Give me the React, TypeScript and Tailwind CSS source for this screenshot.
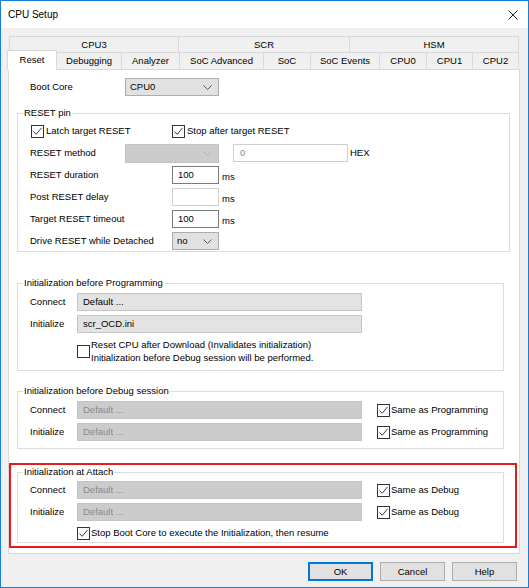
import type { ReactNode } from 'react';

function Check({ checked }: { checked?: boolean }) {
  return (
    <span className="flex h-[13px] w-[13px] shrink-0 items-center justify-center border border-[#333333] bg-white">
      {checked && (
        <svg viewBox="0 0 11 11" className="h-[11px] w-[11px]">
          <path d="M1.5 5.5 L4.2 8.3 L9.6 1.8" stroke="#3c3c3c" strokeWidth="1" fill="none" />
        </svg>
      )}
    </span>
  );
}

function Chevron({ light }: { light?: boolean }) {
  return (
    <svg viewBox="0 0 9 5" className="h-[5px] w-[9px]">
      <path d="M0.5 0.5 L4.5 4.5 L8.5 0.5" stroke={light ? '#b0b0b0' : '#555555'} strokeWidth="1" fill="none" />
    </svg>
  );
}

function Group({ title, className, children }: { title: string; className?: string; children: ReactNode }) {
  return (
    <fieldset className={`border border-[#dcdcdc] ${className ?? ''}`}>
      <legend className="ml-[5px] px-[1px] leading-[12px]">{title}</legend>
      {children}
    </fieldset>
  );
}

function Field({ value, kind }: { value: string; kind: 'readonly' | 'disabled' }) {
  const cls =
    kind === 'readonly'
      ? 'bg-[#e3e3e3] border-[#c4c4c4] text-black'
      : 'bg-[#cccccc] border-[#c4c4c4] text-[#8a8a8a]';
  return (
    <div className={`flex h-[18px] w-[285px] items-center border pl-[5px] ${cls}`}>{value}</div>
  );
}

function Unit({ label, value, light }: { label: string; value?: string; light?: boolean }) {
  return (
    <div className="flex h-[18px] items-center">
      <span className="w-[142px]">{label}</span>
      <div
        className={`flex h-[18px] w-[47px] items-center border bg-white pl-[5px] ${
          light ? 'border-[#cfcfcf]' : 'border-[#7a7a7a]'
        }`}
      >
        {value}
      </div>
      <span className="ml-[3px] mt-[3px]">ms</span>
    </div>
  );
}

const row1 = [
  { label: 'CPU3', w: 'w-[169px]' },
  { label: 'SCR', w: 'w-[171px]' },
  { label: 'HSM', w: 'w-[170px] border-r' },
];

const row2 = [
  { label: 'Debugging', w: 'w-[65px]' },
  { label: 'Analyzer', w: 'w-[58px]' },
  { label: 'SoC Advanced', w: 'w-[84px]' },
  { label: 'SoC', w: 'w-[47px]' },
  { label: 'SoC Events', w: 'w-[69px]' },
  { label: 'CPU0', w: 'w-[47px]' },
  { label: 'CPU1', w: 'w-[46px]' },
  { label: 'CPU2', w: 'w-[46px]' },
];

export default function App() {
  return (
    <div className="flex h-[588px] w-[529px] flex-col border border-[#1a7fd4] bg-[#f0f0f0] font-['Liberation_Sans',Arial,sans-serif] text-[9.5px] leading-[12px] text-black">
      {/* title bar */}
      <div className="flex h-[27px] shrink-0 items-center justify-between bg-white pl-[7px] pr-[10px]">
        <span className="text-[10px]">CPU Setup</span>
        <svg viewBox="0 0 10 10" className="h-[10px] w-[10px]">
          <path d="M0.5 0.5 L9.5 9.5 M9.5 0.5 L0.5 9.5" stroke="#222222" strokeWidth="1" />
        </svg>
      </div>

      {/* tabs */}
      <div className="ml-[8px] mt-[8px] flex h-[16px]">
        {row1.map((t) => (
          <div key={t.label} className={`flex items-center justify-center border-l border-t border-[#d9d9d9] ${t.w}`}>
            {t.label}
          </div>
        ))}
      </div>
      <div className="ml-[6px] flex h-[17px] items-end">
        <div className="relative z-10 -mb-px flex h-[20px] w-[50px] items-center justify-center border-x border-t border-[#d9d9d9] bg-white pb-[2px]">
          Reset
        </div>
        {row2.map((t) => (
          <div
            key={t.label}
            className={`flex h-[17px] items-center justify-center border-r border-t border-[#d9d9d9] ${t.w}`}
          >
            {t.label}
          </div>
        ))}
      </div>

      {/* panel */}
      <div className="ml-[7px] flex h-[485px] w-[512px] flex-col border border-[#d9d9d9] bg-white">
        <div className="ml-[21px] mt-[8px] flex h-[18px] items-center">
          <span className="w-[95px]">Boot Core</span>
          <div className="flex h-[18px] w-[94px] items-center justify-between border border-[#adadad] bg-[#e1e1e1] pl-[4px] pr-[6px]">
            <span>CPU0</span>
            <Chevron />
          </div>
        </div>

        <Group title="RESET pin" className="ml-[8px] mt-[11px] w-[493px]">
          <div className="flex flex-col gap-[4px] pb-[1px] pl-[12px] pt-[3px]">
            <div className="flex h-[18px] items-center">
              <div className="flex w-[142px] items-center gap-[2px] pl-[1px]">
                <Check checked />
                <span>Latch target RESET</span>
              </div>
              <div className="flex items-center gap-[2px]">
                <Check checked />
                <span>Stop after target RESET</span>
              </div>
            </div>
            <div className="flex h-[18px] items-center">
              <span className="w-[95px]">RESET method</span>
              <div className="flex h-[19px] w-[94px] items-center justify-end border border-[#c4c4c4] bg-[#cccccc] pr-[6px]">
                <Chevron light />
              </div>
              <div className="ml-[14px] flex h-[18px] w-[115px] items-center border border-[#cfcfcf] bg-white pl-[6px] text-[#8a8a8a]">
                0
              </div>
              <span className="ml-[2px]">HEX</span>
            </div>
            <Unit label="RESET duration" value="100" />
            <Unit label="Post RESET delay" light />
            <Unit label="Target RESET timeout" value="100" />
            <div className="flex h-[18px] items-center">
              <span className="w-[142px]">Drive RESET while Detached</span>
              <div className="flex h-[18px] w-[47px] items-center justify-between border border-[#adadad] bg-[#e1e1e1] pl-[4px] pr-[6px]">
                <span>no</span>
                <Chevron />
              </div>
            </div>
          </div>
        </Group>

        <Group title="Initialization before Programming" className="ml-[8px] mt-[25px] w-[487px]">
          <div className="flex flex-col pb-[6px] pl-[12px] pt-[4px]">
            <div className="flex flex-col gap-[4px]">
              <div className="flex items-center">
                <span className="w-[47px]">Connect</span>
                <Field value="Default ..." kind="readonly" />
              </div>
              <div className="flex items-center">
                <span className="w-[47px]">Initialize</span>
                <Field value="scr_OCD.ini" kind="readonly" />
              </div>
            </div>
            <div className="ml-[47px] mt-[5px] flex items-center gap-[1px]">
              <Check />
              <div className="leading-[13px]">
                <div>Reset CPU after Download (Invalidates initialization)</div>
                <div>Initialization before Debug session will be performed.</div>
              </div>
            </div>
          </div>
        </Group>

        <Group title="Initialization before Debug session" className="ml-[8px] mt-[14px] w-[487px]">
          <div className="flex flex-col gap-[4px] pb-[7px] pl-[12px] pt-[4px]">
            {['Connect', 'Initialize'].map((l) => (
              <div key={l} className="flex items-center">
                <span className="w-[47px]">{l}</span>
                <Field value="Default ..." kind="disabled" />
                <div className="ml-[15px] flex items-center gap-[1px]">
                  <Check checked />
                  <span>Same as Programming</span>
                </div>
              </div>
            ))}
          </div>
        </Group>

        <div className="mt-[14px] w-[508px] border-2 border-[#e31b1b] pb-[3px]">
          <Group title="Initialization at Attach" className="ml-[6px] mt-px w-[487px]">
            <div className="flex flex-col pb-[1px] pl-[12px] pt-[3px]">
              <div className="flex flex-col gap-[4px]">
                {['Connect', 'Initialize'].map((l) => (
                  <div key={l} className="flex items-center">
                    <span className="w-[47px]">{l}</span>
                    <Field value="Default ..." kind="disabled" />
                    <div className="ml-[15px] flex items-center gap-[1px]">
                      <Check checked />
                      <span>Same as Debug</span>
                    </div>
                  </div>
                ))}
              </div>
              <div className="ml-[47px] mt-[4px] flex h-[16px] items-center gap-[1px]">
                <Check checked />
                <span>Stop Boot Core to execute the Initialization, then resume</span>
              </div>
            </div>
          </Group>
        </div>
      </div>

      {/* buttons */}
      <div className="mt-[8px] flex justify-end gap-[7px] pr-[11px]">
        <button className="h-[19px] w-[65px] border-2 border-[#0078d7] bg-[#e1e1e1]">OK</button>
        <button className="h-[19px] w-[65px] border border-[#adadad] bg-[#e1e1e1]">Cancel</button>
        <button className="h-[19px] w-[65px] border border-[#adadad] bg-[#e1e1e1]">Help</button>
      </div>
    </div>
  );
}
